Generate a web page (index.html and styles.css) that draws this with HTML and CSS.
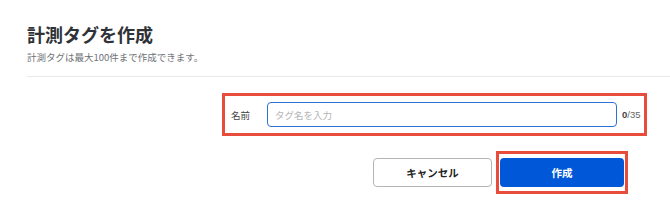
FILE: index.html
```html
<!DOCTYPE html>
<html lang="ja">
<head>
  <meta charset="UTF-8" />
  <title>計測タグを作成</title>
  <link rel="stylesheet" href="styles.css">
</head>
<body>
  <div class="page">
    <div class="head">
      <h1 class="title">計測タグを作成</h1>
      <p class="note">計測タグは最大100件まで作成できます。</p>
    </div>
    <div class="divider"></div>

    <div class="form-row">
      <div class="field mark">
        <label class="label" for="tagName">名前</label>
        <input type="text" id="tagName" class="input" placeholder="タグ名を入力" maxlength="35">
        <span class="count"><b>0</b>/35</span>
      </div>
    </div>

    <div class="actions">
      <button class="btn btn-cancel">キャンセル</button>
      <div class="mark mark-btn">
        <button class="btn btn-primary">作成</button>
      </div>
    </div>
  </div>
</body>
</html>
```

FILE: styles.css
```css
body {
  margin: 0;
  background: #fff;
  font-family: "Noto Sans CJK JP", "Noto Sans", sans-serif;
  color: #333;
}

.page {
  width: 670px;
  height: 201px;
  overflow: hidden;
}

.head {
  padding: 22px 0 0 27px;
}

.title {
  margin: 0;
  font-size: 18px;
  line-height: 24px;
  font-weight: 700;
  color: #2f3337;
}

.note {
  margin: 4px 0 0;
  font-size: 9.5px;
  line-height: 14px;
  color: #6f7276;
}

.divider {
  margin: 12px 0 0 27px;
  height: 1px;
  background: #e9e9e9;
}

.mark {
  border: 3px solid #e84c3d;
}

.form-row {
  display: flex;
  justify-content: flex-end;
  padding: 16px 23px 0 0;
}

.field {
  width: 419px;
  height: 37px;
  display: flex;
  align-items: center;
}

.label {
  flex: none;
  width: 36px;
  padding-left: 6px;
  font-size: 9.5px;
  color: #444;
}

.input {
  flex: none;
  box-sizing: border-box;
  width: 350px;
  height: 25px;
  margin: 0;
  padding: 0 7px;
  border: 1.5px solid #2f6fd8;
  border-radius: 4px;
  font-family: inherit;
  font-size: 9.5px;
  color: #333;
  outline: none;
}

.input::placeholder {
  color: #b4b4b4;
}

.count {
  flex: none;
  margin-left: 5px;
  font-family: "Liberation Sans", Arial, sans-serif;
  font-size: 9.5px;
  color: #666;
  white-space: nowrap;
}

.count b {
  color: #444;
}

.actions {
  display: flex;
  justify-content: flex-end;
  align-items: center;
  gap: 4px;
  padding: 15px 42px 0 0;
}

.btn {
  box-sizing: border-box;
  height: 29px;
  border-radius: 4px;
  font-family: inherit;
  font-size: 10.5px;
  font-weight: 700;
  cursor: pointer;
}

.btn-cancel {
  width: 119px;
  background: #fff;
  border: 1px solid #b5b5b5;
  color: #222;
}

.mark-btn {
  padding: 4px 1px;
  display: flex;
}

.btn-primary {
  width: 124px;
  background: #0058d9;
  border: none;
  color: #fff;
}
```
